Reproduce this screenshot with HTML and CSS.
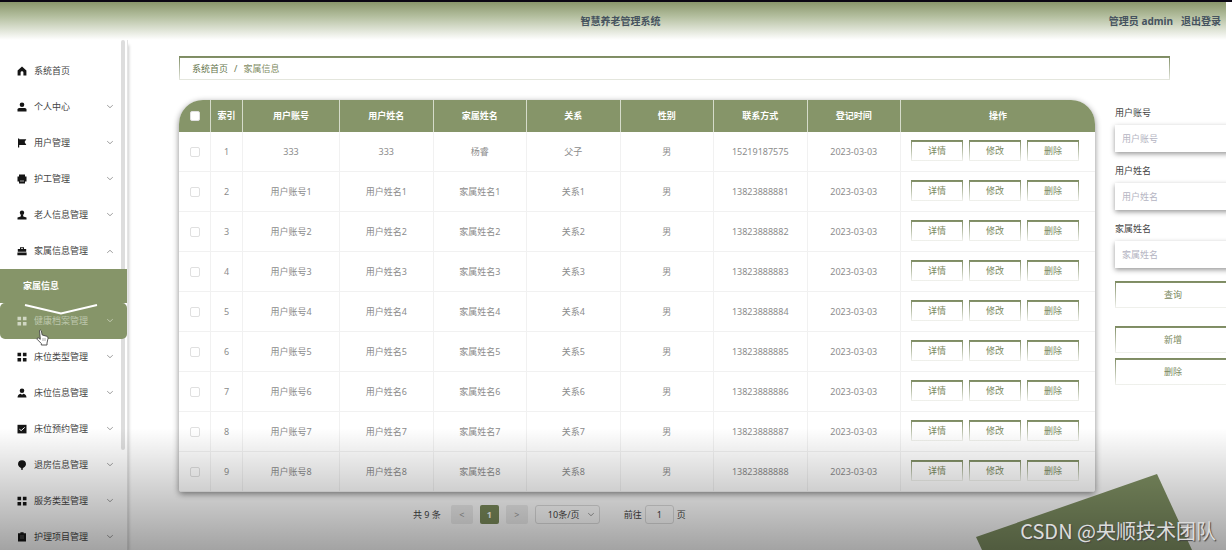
FILE: index.html
```html
<!DOCTYPE html>
<html lang="zh-CN">
<head>
<meta charset="utf-8">
<title>智慧养老管理系统</title>
<link rel="stylesheet" href="styles.css">
</head>
<body>
<svg class="sprite" aria-hidden="true">
  <symbol id="home" viewBox="0 0 10 10"><path d="M5 .6 9.4 4.4V9.4H6.4V6.6a1.4 1.4 0 0 0-2.8 0V9.4H.6V4.4Z"/></symbol>
  <symbol id="user" viewBox="0 0 10 10"><circle cx="5" cy="2.8" r="2.3"/><path d="M.5 9.5V7.6Q.5 6 2.2 6H7.8Q9.5 6 9.5 7.6V9.5Z"/></symbol>
  <symbol id="flag" viewBox="0 0 10 10"><path d="M1 .5H2.2V1.2H9.3L7.6 4 9.3 6.9H2.2V9.6H1Z"/></symbol>
  <symbol id="printer" viewBox="0 0 10 10"><path d="M2 .6H8V2.4H9.5V7.4H8V9.5H2V7.4H.5V2.4H2Z"/><path d="M3 7H7" stroke="#aaa"/></symbol>
  <symbol id="elder" viewBox="0 0 10 10"><circle cx="5" cy="2.7" r="2.2"/><path d="M4 4.5H6L6.3 6.4 9.5 7.6V9.5H.5V7.6L3.7 6.4Z"/></symbol>
  <symbol id="case" viewBox="0 0 10 10"><path d="M3 3V1.2H7V3H9.2V5.8H.8V3ZM4 2.2V3H6V2.2ZM.4 6.5H9.6V9.3H.4Z" fill-rule="evenodd"/></symbol>
  <symbol id="grid" viewBox="0 0 10 10"><path d="M.5.8H4.1V4.3H.5ZM5.9.8H9.5V4.3H5.9ZM.5 5.9H4.1V9.4H.5ZM5.9 5.9H9.5V9.4H5.9Z"/></symbol>
  <symbol id="person" viewBox="0 0 10 10"><circle cx="5" cy="2.8" r="2.3"/><path d="M.5 9.5Q.8 6.3 3.5 5.7L5 6.8 6.5 5.7Q9.2 6.3 9.5 9.5Z"/></symbol>
  <symbol id="check" viewBox="0 0 10 10"><path d="M.5.8H9.5V9.4H.5Z"/><path d="M2.4 5.2 4.2 6.6 7.7 3.4" fill="none" stroke="#fff"/></symbol>
  <symbol id="pin" viewBox="0 0 10 10"><path d="M5 .3A4 4 0 0 1 9 4.2C9 6 7 7.400 5.600 8.400L6 9.800H4L4.400 8.400C3 7.400 1 6 1 4.200A4 4 0 0 1 5 .3Z"/></symbol>
  <symbol id="board" viewBox="0 0 10 10"><path d="M1 1.3H3.4V.3H6.6V1.3H9V9.6H1Z"/><path d="M3 4H7M3 6H7" stroke="#888" stroke-width=".6"/></symbol>
  <symbol id="arrow" viewBox="0 0 8 8"><path d="M1.2 2.2 4 4.700 6.8 2.2" fill="none" stroke="currentColor" stroke-width=".8"/></symbol>
</svg>

<div class="app">
  <header class="topbar">
    <h1 class="brand">智慧养老管理系统</h1>
    <div class="account"><span>管理员 admin</span><a href="#">退出登录</a></div>
  </header>

  <div class="layout">
    <nav class="sidebar">
      <a class="item" href="#"><svg class="icon"><use href="#home"/></svg><span>系统首页</span></a>
      <a class="item" href="#"><svg class="icon"><use href="#user"/></svg><span>个人中心</span><svg class="arrow"><use href="#arrow"/></svg></a>
      <a class="item" href="#"><svg class="icon"><use href="#flag"/></svg><span>用户管理</span><svg class="arrow"><use href="#arrow"/></svg></a>
      <a class="item" href="#"><svg class="icon"><use href="#printer"/></svg><span>护工管理</span><svg class="arrow"><use href="#arrow"/></svg></a>
      <a class="item" href="#"><svg class="icon"><use href="#elder"/></svg><span>老人信息管理</span><svg class="arrow"><use href="#arrow"/></svg></a>
      <a class="item" href="#"><svg class="icon"><use href="#case"/></svg><span>家属信息管理</span><svg class="arrow open"><use href="#arrow"/></svg></a>
      <a class="subitem" href="#">家属信息</a>
      <a class="item hover" href="#"><svg class="icon"><use href="#grid"/></svg><span>健康档案管理</span><svg class="arrow"><use href="#arrow"/></svg>
        <svg class="notch" viewBox="0 0 74 12"><path d="M1 2 37 10.5 73 2" fill="none" stroke="#fff" stroke-width="2"/></svg>
        <svg class="pointer" viewBox="0 0 13 17"><path d="M3.5 1.5Q4.5.5 5.3 1.8L6.2 6 11 7.3Q12.3 7.8 12 9.5L11 14V16H5.3V14.5L1 10.2Q1 8.6 2.6 9L4.3 10.3Z" fill="#fff" stroke="#444" stroke-width=".9"/><path d="M7 9V12M9 9V12" stroke="#777" stroke-width=".6"/></svg>
      </a>
      <a class="item" href="#"><svg class="icon"><use href="#grid"/></svg><span>床位类型管理</span><svg class="arrow"><use href="#arrow"/></svg></a>
      <a class="item" href="#"><svg class="icon"><use href="#person"/></svg><span>床位信息管理</span><svg class="arrow"><use href="#arrow"/></svg></a>
      <a class="item" href="#"><svg class="icon"><use href="#check"/></svg><span>床位预约管理</span><svg class="arrow"><use href="#arrow"/></svg></a>
      <a class="item" href="#"><svg class="icon"><use href="#pin"/></svg><span>退房信息管理</span><svg class="arrow"><use href="#arrow"/></svg></a>
      <a class="item" href="#"><svg class="icon"><use href="#grid"/></svg><span>服务类型管理</span><svg class="arrow"><use href="#arrow"/></svg></a>
      <a class="item" href="#"><svg class="icon"><use href="#board"/></svg><span>护理项目管理</span><svg class="arrow"><use href="#arrow"/></svg></a>
      <div class="scrollbar"></div>
    </nav>

    <main class="main">
      <div class="crumbs"><a href="#">系统首页</a><span>/</span><span class="here">家属信息</span></div>
      <div class="content">
        <section class="list">
          <div class="card">
            <table class="table">
              <colgroup><col class="c-small"><col class="c-small"><col class="c-account"><col span="6"><col class="c-actions"></colgroup>
              <thead><tr>
                <th><input type="checkbox" class="box" aria-label="全选"></th><th>索引</th><th>用户账号</th><th>用户姓名</th><th>家属姓名</th><th>关系</th><th>性别</th><th>联系方式</th><th>登记时间</th><th>操作</th>
              </tr></thead>
              <tbody id="rows"></tbody>
            </table>
          </div>
          <div class="pager">
            <span class="total">共 9 条</span>
            <button class="step" type="button">&lt;</button>
            <button class="page" type="button">1</button>
            <button class="step" type="button">&gt;</button>
            <span class="size"><select aria-label="每页条数"><option>10条/页</option></select><svg class="arrow"><use href="#arrow"/></svg></span>
            <label class="jump">前往<input type="text" value="1">页</label>
          </div>
        </section>
        <form class="filters">
          <label for="f1">用户账号</label><input id="f1" type="text" placeholder="用户账号">
          <label for="f2">用户姓名</label><input id="f2" type="text" placeholder="用户姓名">
          <label for="f3">家属姓名</label><input id="f3" type="text" placeholder="家属姓名">
          <button class="btn query" type="button">查询</button>
          <button class="btn" type="button">新增</button>
          <button class="btn" type="button">删除</button>
        </form>
      </div>
    </main>
  </div>
  <svg class="ribbon" viewBox="0 0 216 76"><path d="M0 63 181 0 216 76H6Z" fill="#7e8f62"/></svg>
  <div class="shade"></div>
  <div class="watermark">CSDN @央顺技术团队</div>
</div>
<script src="rows.js"></script>
</body>
</html>
```
FILE: styles.css
```css
* { box-sizing: border-box; }
body {
  margin: 0;
  background: #fff;
  border-top: 2px solid #0b0714;
  font: 9px/12px "Noto Sans", "Noto Sans CJK SC", sans-serif;
  color: #444;
}
a { color: inherit; text-decoration: none; }
button, input, select { font: inherit; color: inherit; margin: 0; }
.sprite { position: absolute; width: 0; height: 0; }

.app {
  position: relative;
  display: flex;
  flex-direction: column;
  height: calc(100vh - 2px);
  margin-right: 6px;
  overflow: hidden;
}
.topbar {
  flex: none;
  display: grid;
  grid-template-columns: 1fr auto 1fr;
  align-items: center;
  height: 38px;
  padding: 0 5px 0 20px;
  background: linear-gradient(#8a976c, #b4bf9f 38%, #fff);
  color: #46535f;
  font-size: 10px;
  font-weight: 700;
}
.brand { grid-column: 2; margin: 0; font-size: 10px; }
.account { display: flex; justify-content: flex-end; gap: 8px; }

.layout { flex: 1; display: flex; min-height: 0; }
.sidebar {
  position: relative;
  flex: none;
  width: 128px;
  padding-top: 13px;
  border-right: 1px solid #e4e4e4;
  box-shadow: 3px 3px 3px -2px #ccc;
}
.item {
  position: relative;
  display: flex;
  align-items: center;
  height: 36px;
  padding: 0 13px 0 17px;
}
.item span { flex: 1; margin-left: 7px; }
.icon { width: 10px; height: 10px; fill: #151515; }
.arrow { width: 8px; height: 8px; color: #888; }
.open { transform: rotate(180deg); }
.subitem {
  position: relative;
  z-index: 1;
  display: flex;
  align-items: center;
  height: 34px;
  padding-left: 23px;
  background: #869569;
  color: #fff;
  font-weight: 700;
}
.hover { z-index: 1; background: #869569; border-radius: 5px; color: #bdc7ac; }
.hover .icon { fill: #d0d7c3; }
.hover .arrow { color: #cbd3bd; }
.notch { position: absolute; left: 24px; top: 0; width: 74px; height: 12px; }
.pointer { position: absolute; left: 36px; top: 26px; width: 13px; height: 17px; }
.scrollbar {
  position: absolute;
  top: 0;
  right: 2px;
  width: 4px;
  height: 410px;
  border-radius: 2px;
  background: #ddd;
}

.main { flex: 1; min-width: 0; padding: 16px 0 0 51px; }
.crumbs {
  display: flex;
  align-items: center;
  gap: 6px;
  height: 24px;
  margin-right: 56px;
  padding-left: 12px;
  border: 1px solid;
  border-top-width: 2px;
  border-image: linear-gradient(#7c8a60, #e6e8e0) 2 1 1;
  color: #66754c;
}
.here { color: #7f8d66; }
.content { display: flex; gap: 20px; padding-top: 20px; }
.list { flex: 1; min-width: 0; }
.card {
  overflow: hidden;
  border-radius: 24px 24px 3px 3px;
  box-shadow: 0 2px 6px #888;
}
.table {
  width: 100%;
  table-layout: fixed;
  border-collapse: separate;
  border-spacing: 0;
  text-align: center;
  color: #8c8c8c;
}
.c-small { width: 32px; }
.c-account { width: 97px; }
.c-actions { width: 194px; }
th {
  height: 32px;
  padding: 0;
  background: #869569;
  border-right: 1px solid #d5dbca;
  color: #fff;
}
td {
  height: 40px;
  padding: 1px 0 0;
  border-right: 1px solid #f1f1f1;
  border-bottom: 1px solid #f1f1f1;
  background: #fff;
}
th:last-child, td:last-child { border-right: 0; }
.box {
  appearance: none;
  display: block;
  width: 10px;
  height: 10px;
  margin: 0 auto;
  border: 1px solid #e0e0e0;
  border-radius: 2px;
  background: #fff;
}
.actions { display: flex; gap: 6px; padding: 0 10px 4px; }
.btn {
  height: 27px;
  padding: 0;
  border: 1px solid;
  border-top-width: 2px;
  border-image: linear-gradient(#7c8a60, #f1f2ee) 2 1 1;
  background: transparent;
  color: #7a8960;
}
.actions .btn { width: 52px; height: 21px; }

.pager {
  display: flex;
  align-items: center;
  height: 19px;
  margin-top: 13px;
  padding-left: 234px;
}
.pager button { height: 19px; padding: 0; border: 0; border-radius: 2px; }
.total { margin-right: 10px; }
.step { width: 22px; background: #ededed; color: #999; }
.pager .page { width: 19px; margin: 0 7px; background: #7b8b5b; color: #fff; font-weight: 700; }
.size { position: relative; margin: 0 24px 0 7px; }
.size select {
  appearance: none;
  width: 65px;
  height: 19px;
  padding: 0 12px;
  border: 1px solid #ddd;
  border-radius: 3px;
  background: transparent;
}
.size .arrow { position: absolute; right: 5px; top: 6px; }
.jump { display: flex; align-items: center; gap: 3px; }
.jump input {
  width: 29px;
  height: 19px;
  padding: 0;
  border: 1px solid #ddd;
  border-radius: 3px;
  background: transparent;
  text-align: center;
}

.filters {
  flex: none;
  display: flex;
  flex-direction: column;
  width: 116px;
  margin-right: -5px;
  padding-top: 7px;
}
.filters input {
  height: 27px;
  margin: 6px 0 13px;
  padding: 0 7px;
  border: 0;
  background: #fff;
  box-shadow: 0 2px 5px #999;
}
.filters input::placeholder { color: #b4b4c2; opacity: 1; }
.filters .btn { margin-bottom: 5px; }
.filters .query { margin-bottom: 18px; }

.ribbon { position: absolute; right: 34px; bottom: 0; width: 216px; height: 76px; }
.shade {
  position: absolute;
  z-index: 2;
  left: 0;
  right: 0;
  bottom: 0;
  height: 122px;
  background: linear-gradient(transparent, rgba(0, 0, 0, .36));
  pointer-events: none;
}
.watermark {
  position: absolute;
  z-index: 3;
  right: 10px;
  bottom: 6px;
  color: #dcdcdc;
  font: 20px/26px "Noto Sans CJK SC", sans-serif;
  text-shadow: 1px 1px 1px #444;
}
```
FILE: rows.js
```js
const people = [["333", "333", "杨睿", "父子", "15219187575"]];
for (let i = 1; i <= 8; i++) {
  people.push(["用户账号" + i, "用户姓名" + i, "家属姓名" + i, "关系" + i, "1382388888" + i]);
}
const actions = ["详情", "修改", "删除"]
  .map((name) => `<button class="btn" type="button">${name}</button>`)
  .join("");
document.getElementById("rows").innerHTML = people
  .map(([account, name, family, relation, phone], i) => {
    const cells = [i + 1, account, name, family, relation, "男", phone, "2023-03-03"];
    return `<tr><td><input type="checkbox" class="box" aria-label="选择第${i + 1}行"></td>` +
      cells.map((text) => `<td>${text}</td>`).join("") +
      `<td><div class="actions">${actions}</div></td></tr>`;
  })
  .join("");
```
